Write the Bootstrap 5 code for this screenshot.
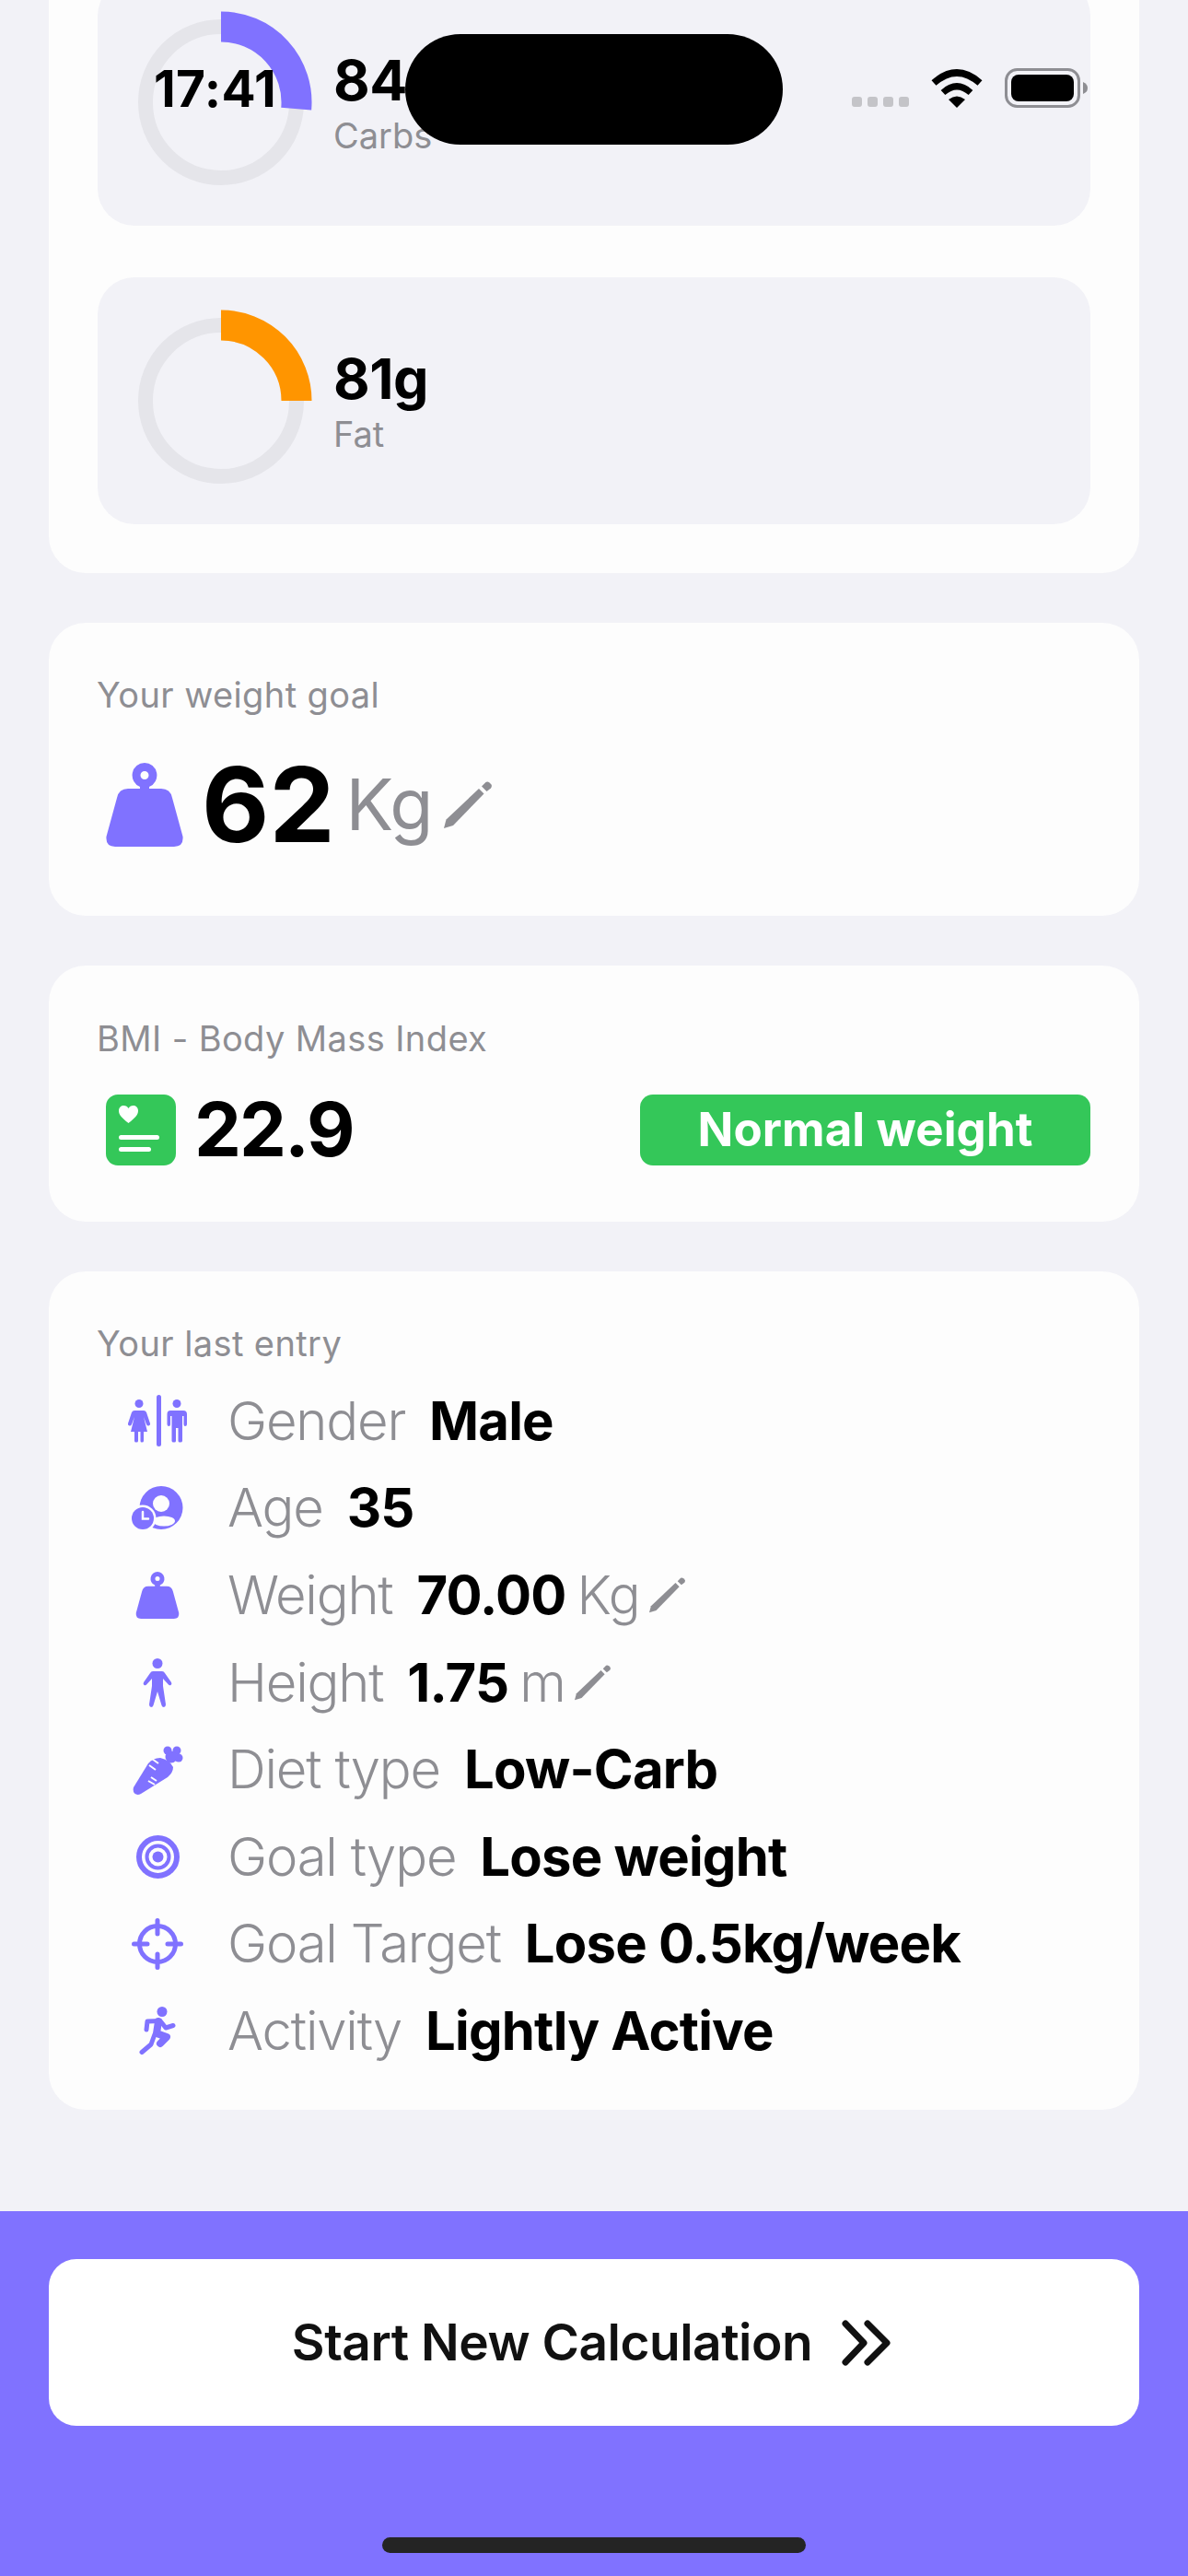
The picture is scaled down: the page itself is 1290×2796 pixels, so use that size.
<!DOCTYPE html>
<html lang="en">
<head>
    <meta charset="UTF-8">
    <meta name="viewport" content="width=device-width, initial-scale=1.0">
    <title>Last entry</title>
    <link href="https://cdn.jsdelivr.net/npm/bootstrap@5.3.0/dist/css/bootstrap.min.css" rel="stylesheet">
    <style>
        html, body { height: 2796px; }
        body { background: #f2f2f7; font-family: Inter, "Liberation Sans", sans-serif; color: #000; overflow: hidden; position: relative; }
        svg { display: block; flex: none; }
        .fill-accent { fill: #8072ff; }
        .screen-main { margin: -76px 53px 0; }
        .panel { background: #fdfdfd; border: 0; border-radius: 40px; margin-bottom: 54px; }
        .panel-macros { padding: 53px; gap: 56px; }
        .panel-goal { padding: 55px 53px 75px; }
        .panel-bmi { padding: 56px 53px 61px; }
        .panel-entry { padding: 55px 53px 38px; margin-bottom: 0; }
        .macro-tile { background: #f2f2f7; border-radius: 40px; height: 268px; padding-left: 34px; gap: 22px; }
        .macro-value { font-size: 61px; font-weight: 700; line-height: 70px; letter-spacing: -.5px; }
        .macro-name { font-size: 38px; line-height: 46px; color: #8e8e93; margin-top: 2px; }
        .panel-label { font-size: 38px; line-height: 46px; color: #8e8e93; letter-spacing: .4px; margin-left: -1px; }
        .goal-row { margin-top: 51px; padding-left: 9px; }
        .goal-number { font-size: 113px; font-weight: 700; line-height: 91px; margin-left: 20px; }
        .goal-unit { font-size: 77px; font-weight: 400; line-height: 91px; color: #8e8e93; margin-left: 12px; letter-spacing: -1px; }
        .goal-pencil { margin-left: 13px; }
        .bmi-row { margin-top: 38px; padding-left: 9px; }
        .bmi-number { font-size: 81px; font-weight: 700; line-height: 77px; margin-left: 20px; letter-spacing: -2px; }
        .bmi-status { background: #34c759; color: #fff; border-radius: 14px; width: 489px; height: 77px; font-size: 51px; font-weight: 700; letter-spacing: .1px; }
        .entry-list { margin-top: 14px; }
        .entry-row { height: 94.6px; font-size: 58px; }
        .entry-icon { width: 130px; margin-right: 11px; }
        .entry-name { font-weight: 300; color: #8e8e93; margin-right: 26px; letter-spacing: -1.2px; }
        .entry-value { font-weight: 700; letter-spacing: -.8px; }
        .entry-unit { font-weight: 300; color: #8e8e93; margin-left: 12px; letter-spacing: -1px; }
        .entry-pencil { margin-left: 10px; }
        .screen-footer { margin-top: auto; background: #8072ff; height: 396px; padding: 52px 53px 0; }
        .start-btn { background: #fff; color: #111; border: 0; border-radius: 30px; height: 181px; width: 100%; font-size: 55px; font-weight: 600; gap: 32px; letter-spacing: -.5px; padding-right: 18px; }
        .start-btn:hover { background: #fff; color: #111; }
        .home-bar { width: 460px; height: 17px; border-radius: 9px; background: #242424; margin: 121px auto 0; }
        .status-time { position: absolute; left: 167px; top: 62px; font-size: 55px; font-weight: 700; line-height: 68px; letter-spacing: .4px; }
        .island { position: absolute; left: 440px; top: 37px; width: 410px; height: 120px; border-radius: 60px; background: #000; }
        .status-icons { position: absolute; left: 925px; top: 74px; gap: 24px; }
        .signal-dots { gap: 6px; margin-bottom: 1px; }
        .signal-dots span { width: 11px; height: 11px; border-radius: 3px; background: #c4c4c8; }
    </style>
</head>
<body class="d-flex flex-column">

<svg width="0" height="0" class="position-absolute">
    <symbol id="weight-shape" viewBox="0 0 84 91">
        <path fill-rule="evenodd" d="M42 0a13.500 13.500 0 0 1 5 26v2h13q10 0 12 10l11.500 42q1 11-9.500 11H10Q-.5 91 .5 80L12 38q2-10 12-10h13v-2a13.500 13.500 0 0 1 5-26Zm0 9a4.500 4.500 0 1 0 0 9 4.500 4.500 0 0 0 0-9Z"/>
    </symbol>
    <symbol id="pencil-shape" viewBox="0 0 52 52">
        <path d="M0 51l2.500-9.500L38 8l5.500 5.500L10 48Z"/>
        <path d="M41 5.500 45.500 1q2-1 4 .5l2 2q1 2-.5 4L46.500 11Z"/>
    </symbol>
</svg>

<main class="screen-main">
    <section class="card panel panel-macros">
        <div class="macro-tile d-flex align-items-center">
            <svg width="200" height="200" viewBox="0 0 200 200" fill="none">
                <circle cx="100" cy="100" r="82" stroke="#e5e5ea" stroke-width="16"/>
                <path d="M100 18A82 82 0 0 1 181.700 107.100" stroke="#8072ff" stroke-width="33"/>
            </svg>
            <div>
                <div class="macro-value">84g</div>
                <div class="macro-name">Carbs</div>
            </div>
        </div>
        <div class="macro-tile d-flex align-items-center">
            <svg width="200" height="200" viewBox="0 0 200 200" fill="none">
                <circle cx="100" cy="100" r="82" stroke="#e5e5ea" stroke-width="16"/>
                <path d="M100 18A82 82 0 0 1 182 100" stroke="#ff9500" stroke-width="33"/>
            </svg>
            <div>
                <div class="macro-value">81g</div>
                <div class="macro-name">Fat</div>
            </div>
        </div>
    </section>

    <section class="card panel panel-goal">
        <div class="panel-label">Your weight goal</div>
        <div class="goal-row d-flex align-items-center">
            <svg width="84" height="91" class="fill-accent"><use href="#weight-shape"/></svg>
            <span class="goal-number">62</span>
            <span class="goal-unit">Kg</span>
            <svg width="52" height="52" class="goal-pencil" fill="#8e8e93"><use href="#pencil-shape"/></svg>
        </div>
    </section>

    <section class="card panel panel-bmi">
        <div class="panel-label">BMI - Body Mass Index</div>
        <div class="bmi-row d-flex align-items-center">
            <svg width="76" height="77" viewBox="0 0 76 77">
                <rect width="76" height="77" rx="13" fill="#34c759"/>
                <path d="M24.500 31C17 25 14 22 14 17.500 14 14 16.500 12 19.500 12c2 0 4 1 5 3 1-2 3-3 5-3 3 0 5.500 2 5.500 5.500 0 4.500-3 7.500-10.500 13.500Z" fill="#fff"/>
                <rect x="14" y="44" width="44" height="5" rx="2.500" fill="#fff"/>
                <rect x="14" y="57" width="35" height="5" rx="2.500" fill="#fff"/>
            </svg>
            <span class="bmi-number">22.9</span>
            <span class="bmi-status d-flex align-items-center justify-content-center ms-auto">Normal weight</span>
        </div>
    </section>

    <section class="card panel panel-entry">
        <div class="panel-label">Your last entry</div>
        <div class="entry-list">
            <div class="entry-row d-flex align-items-center">
                <div class="entry-icon d-flex justify-content-center">
                    <svg width="64" height="56" viewBox="0 0 64 56" class="fill-accent">
                        <circle cx="12" cy="9.500" r="4.500"/>
                        <path d="M7 17H17q2 0 3 2l4 12q.5 2-1.500 2.500Q21 34 20 32l-3-8 4 16H17V50q0 1.500-2 1.500-1.500 0-1.500-1.500V40H11V50q0 1.500-2 1.500-2 0-2-1.500V40H3L7 24 4 32q-1 2-2.500 1.500Q-.5 33 0 31L4 19q1-2 3-2Z"/>
                        <rect x="31" width="5" height="56" rx="2.500"/>
                        <circle cx="53" cy="9.500" r="4.500"/>
                        <path d="M46 17H60q4 0 4 4V32q0 2-2 2-1.500 0-1.500-2V23H59V50q0 1.500-2.500 1.500-2 0-2-1.500V36H52V50q0 1.500-2 1.500-2.500 0-2.500-1.500V23H46V32q0 2-1.500 2-2 0-2-2V21q0-4 3.500-4Z"/>
                    </svg>
                </div>
                <span class="entry-name">Gender</span><span class="entry-value">Male</span>
            </div>
            <div class="entry-row d-flex align-items-center">
                <div class="entry-icon d-flex justify-content-center">
                    <svg width="56" height="47" viewBox="0 0 56 47">
                        <circle cx="32" cy="23.500" r="23.500" fill="#8072ff"/>
                        <circle cx="32" cy="19" r="9" fill="#fdfdfd"/>
                        <ellipse cx="35" cy="38" rx="12" ry="5.500" fill="#fdfdfd"/>
                        <circle cx="12" cy="35" r="14.500" fill="#fdfdfd"/>
                        <circle cx="12" cy="35" r="12" fill="#8072ff"/>
                        <path d="M12 28v7.500h6" stroke="#fdfdfd" stroke-width="2.500" fill="none" stroke-linecap="round"/>
                    </svg>
                </div>
                <span class="entry-name">Age</span><span class="entry-value">35</span>
            </div>
            <div class="entry-row d-flex align-items-center">
                <div class="entry-icon d-flex justify-content-center">
                    <svg width="48" height="51" class="fill-accent"><use href="#weight-shape"/></svg>
                </div>
                <span class="entry-name">Weight</span><span class="entry-value">70.00</span><span class="entry-unit">Kg</span>
                <svg width="39" height="39" class="entry-pencil" fill="#8e8e93"><use href="#pencil-shape"/></svg>
            </div>
            <div class="entry-row d-flex align-items-center">
                <div class="entry-icon d-flex justify-content-center">
                    <svg width="32" height="53" viewBox="0 0 32 53" class="fill-accent">
                        <circle cx="16" cy="5.500" r="5.500"/>
                        <path d="M11 14H21q2 0 3 2l7 10q1 2-.5 3-1.500 1-3-1L22 22v8l3 20q0 2.500-2 3-2 0-2.500-2L16 36l-4.500 15q-.5 2-2.500 2-2-.5-2-3l3-20V22L4.500 28q-1.500 2-3 1Q0 28 1 26L8 16q1-2 3-2Z"/>
                    </svg>
                </div>
                <span class="entry-name">Height</span><span class="entry-value">1.75</span><span class="entry-unit">m</span>
                <svg width="39" height="39" class="entry-pencil" fill="#8e8e93"><use href="#pencil-shape"/></svg>
            </div>
            <div class="entry-row d-flex align-items-center">
                <div class="entry-icon d-flex justify-content-center">
                    <svg width="55" height="54" viewBox="0 0 55 54" class="fill-accent">
                        <path d="M1 46 17 20q5-6 13-6 10 2 14 10 0 6-6 11L9 53q-4 2-7-.5Q0 50 1 46Z"/>
                        <circle cx="38" cy="6" r="4.500"/><circle cx="48" cy="6" r="4.500"/><circle cx="50" cy="14" r="4.500"/><circle cx="42" cy="13" r="6.500"/>
                        <path d="M18 22l7 5M21 15l7 5M17 39l7 4M20 35l6 4" stroke="#fdfdfd" stroke-width="2"/>
                    </svg>
                </div>
                <span class="entry-name">Diet type</span><span class="entry-value">Low-Carb</span>
            </div>
            <div class="entry-row d-flex align-items-center">
                <div class="entry-icon d-flex justify-content-center">
                    <svg width="47" height="47" viewBox="0 0 47 47" fill="none">
                        <circle cx="23.500" cy="23.500" r="20.500" stroke="#8072ff" stroke-width="6"/>
                        <circle cx="23.500" cy="23.500" r="12" stroke="#8072ff" stroke-width="4"/>
                        <circle cx="23.500" cy="23.500" r="6" fill="#8072ff"/>
                    </svg>
                </div>
                <span class="entry-name">Goal type</span><span class="entry-value">Lose weight</span>
            </div>
            <div class="entry-row d-flex align-items-center">
                <div class="entry-icon d-flex justify-content-center">
                    <svg width="56" height="56" viewBox="0 0 56 56" fill="none" stroke="#8072ff" stroke-width="5" stroke-linecap="round">
                        <circle cx="28" cy="28" r="19.500"/>
                        <path d="M28 2.500V17M28 39V53.500M2.500 28H17M39 28H53.500"/>
                    </svg>
                </div>
                <span class="entry-name">Goal Target</span><span class="entry-value">Lose 0.5kg/week</span>
            </div>
            <div class="entry-row d-flex align-items-center">
                <div class="entry-icon d-flex justify-content-center">
                    <svg width="40" height="52" viewBox="0 0 40 52" fill="none" stroke="#8072ff" stroke-width="5" stroke-linecap="round" stroke-linejoin="round">
                        <circle cx="25" cy="5.500" r="5.500" fill="#8072ff" stroke="none"/>
                        <path d="M8 25 9 16 23 15.500 29 23 37 20.500"/>
                        <path d="M21 16 19 29 30 33 23 40" stroke-width="8"/>
                        <path d="M17 30 13 41 3 49.500"/>
                    </svg>
                </div>
                <span class="entry-name">Activity</span><span class="entry-value">Lightly Active</span>
            </div>
        </div>
    </section>
</main>

<footer class="screen-footer">
    <button type="button" class="btn start-btn d-flex align-items-center justify-content-center">
        Start New Calculation
        <svg width="53" height="50" viewBox="0 0 53 50" fill="none" stroke="#111" stroke-width="7" stroke-linecap="round" stroke-linejoin="round">
            <path d="M4 4 24 25 4 46M28 4 49 25 28 46"/>
        </svg>
    </button>
    <div class="home-bar"></div>
</footer>

<!-- status bar sits over the scrolled content -->
<div class="status-time">17:41</div>
<div class="island"></div>
<div class="status-icons d-flex align-items-end">
    <div class="signal-dots d-flex">
        <span></span><span></span><span></span><span></span>
    </div>
    <svg width="56" height="42" viewBox="0 0 56 42" fill="none">
        <path d="M3 15Q28-7 53 15" stroke="#000" stroke-width="7.500"/>
        <path d="M13 25.500Q28 12 43 25.500" stroke="#000" stroke-width="7"/>
        <path d="M19 33Q28 26 37 33L28 42Z" fill="#000"/>
    </svg>
    <svg width="92" height="43" viewBox="0 0 92 43" fill="none">
        <rect x="1.500" y="1.500" width="79" height="40" rx="12" stroke="#8e8e93" stroke-width="3"/>
        <rect x="7" y="7" width="68" height="29" rx="8" fill="#000"/>
        <path d="M85 15q5 2 5 6.500T85 28Z" fill="#8e8e93"/>
    </svg>
</div>

</body>
</html>
